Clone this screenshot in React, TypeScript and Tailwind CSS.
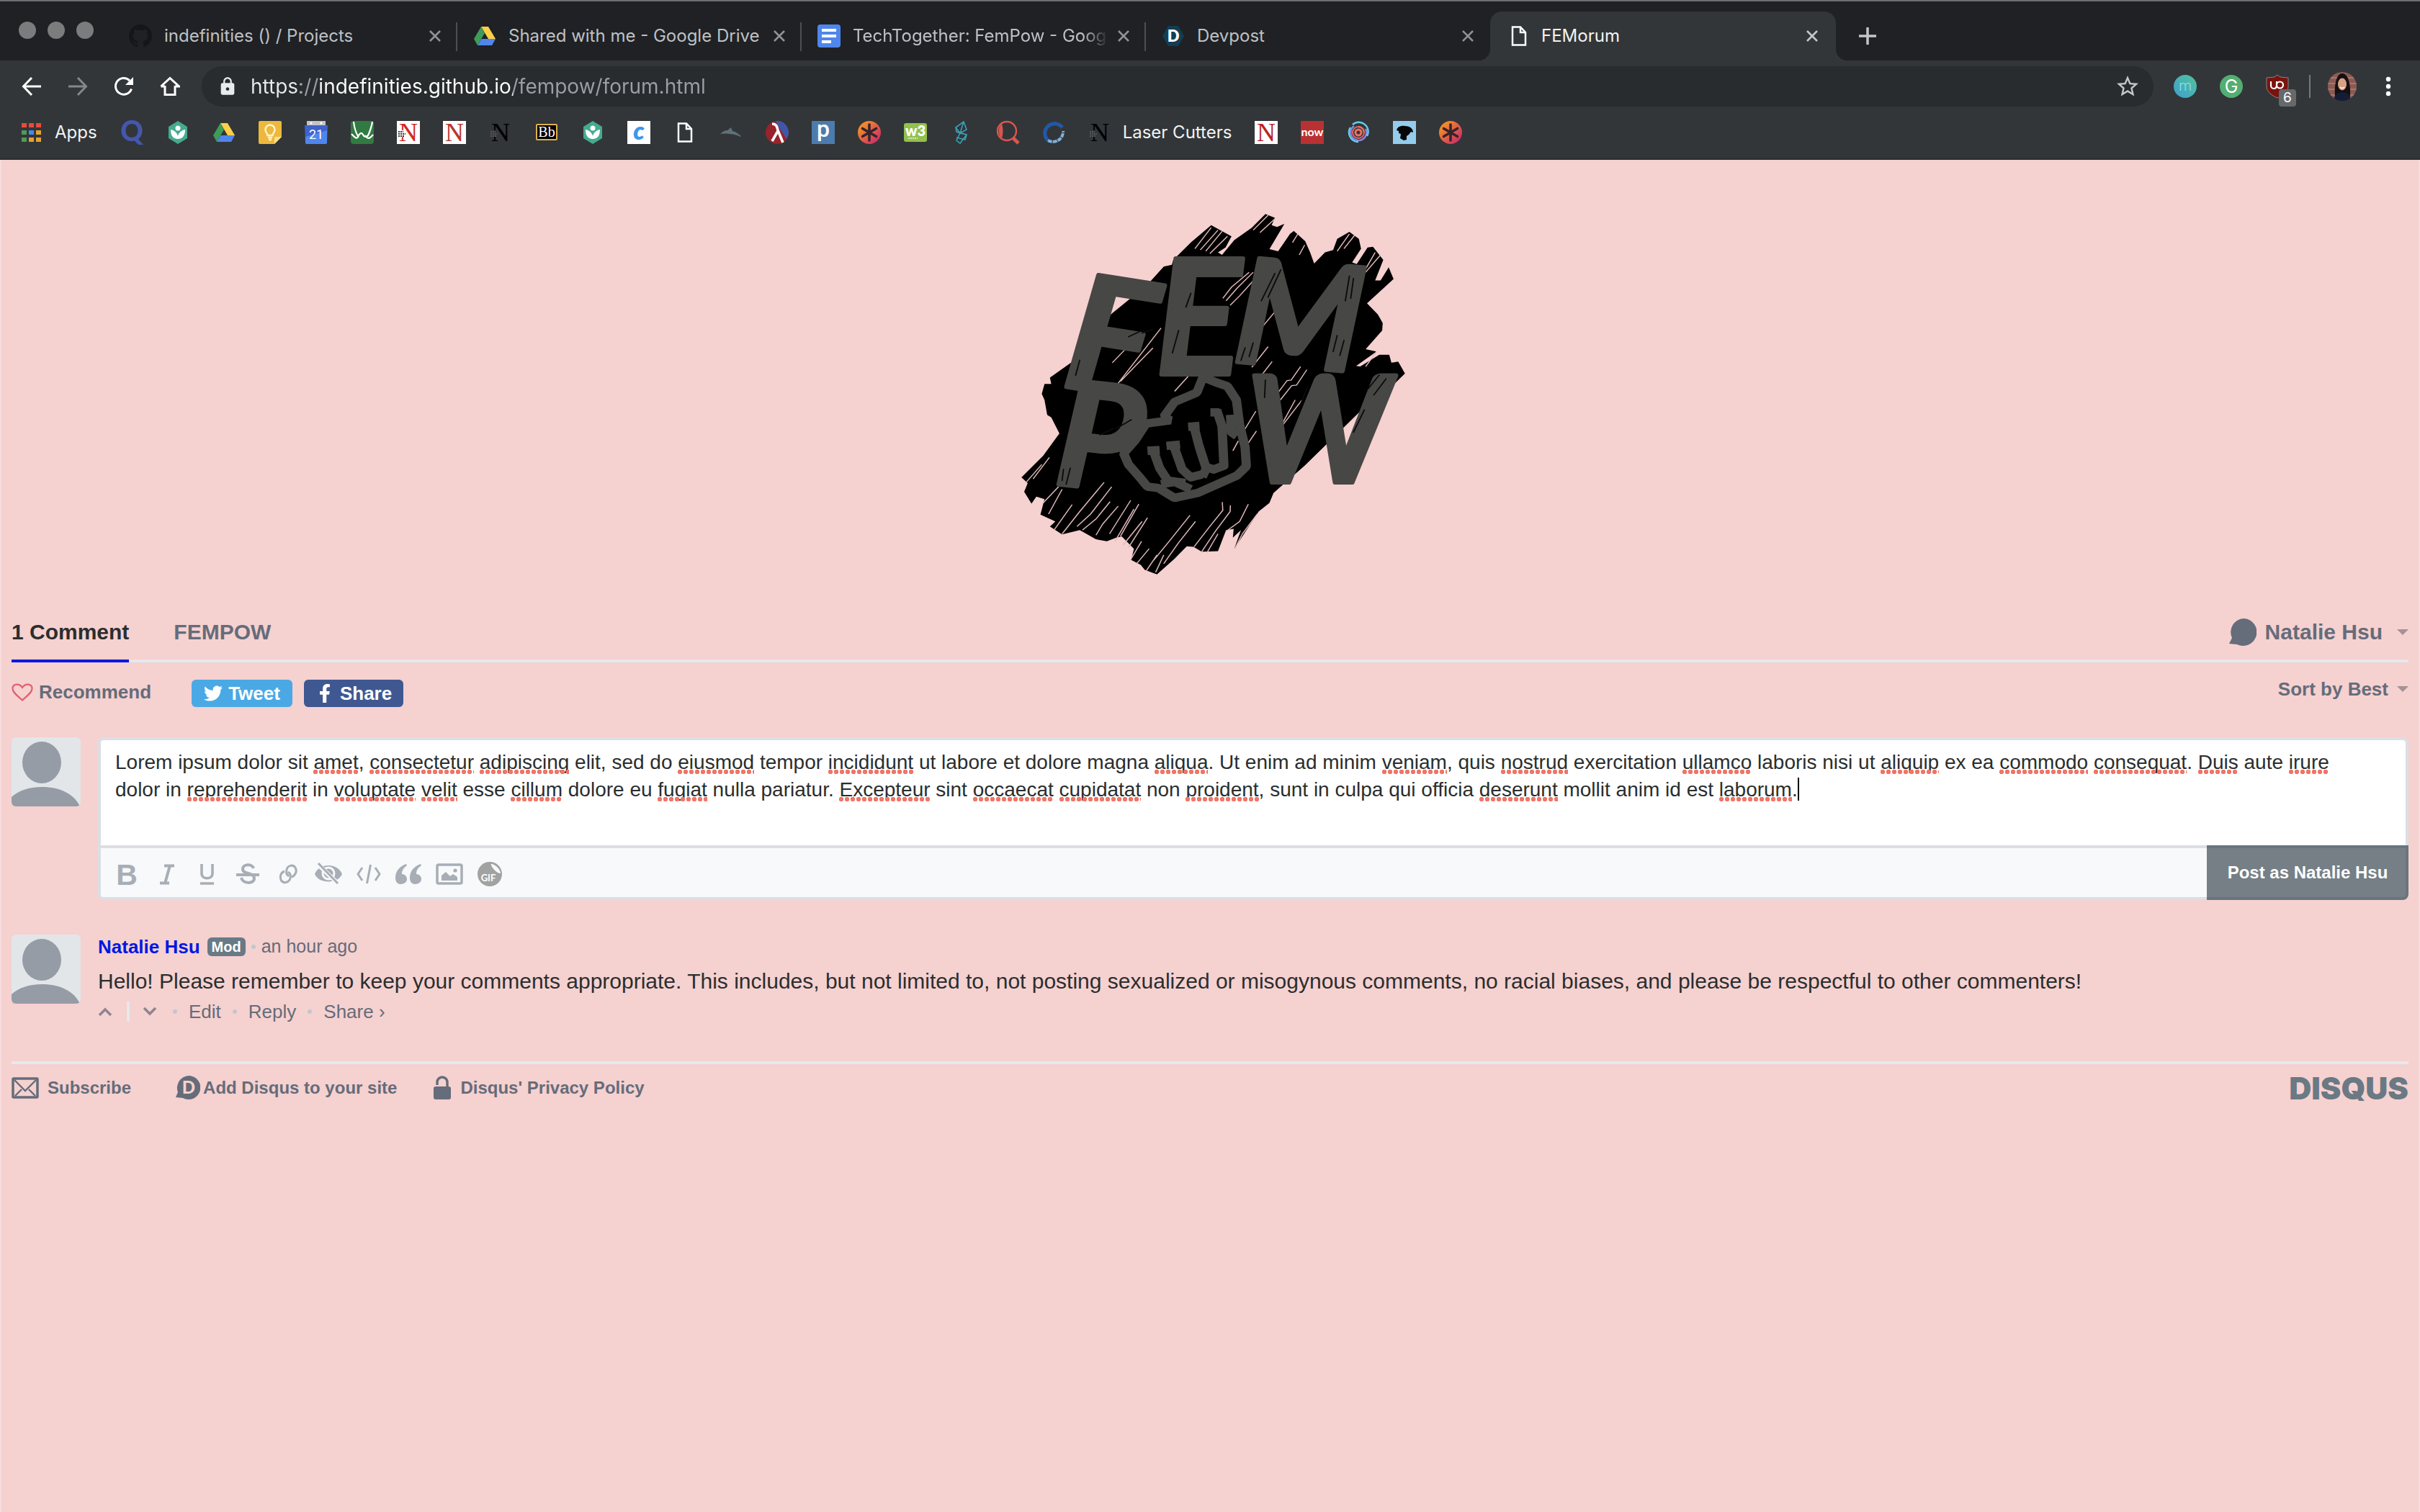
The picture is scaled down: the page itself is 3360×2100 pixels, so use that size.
import React, { useLayoutEffect, useRef, useState } from 'react'
import { FaTwitter, FaFacebookF } from 'react-icons/fa'
import { MdLock, MdStarBorder } from 'react-icons/md'

// words between tildes are the ones the spell checker marks
const LOREM: string[] = [
  'Lorem ipsum dolor sit ~amet~, ~consectetur~ ~adipiscing~ elit, sed do ~eiusmod~ tempor ~incididunt~ ut labore et dolore magna ~aliqua~.',
  'Ut enim ad minim ~veniam~, quis ~nostrud~ exercitation ~ullamco~ laboris nisi ut ~aliquip~ ex ea ~commodo~ ~consequat~.',
  '~Duis~ aute ~irure~ dolor in ~reprehenderit~ in ~voluptate~ ~velit~ esse ~cillum~ dolore eu ~fugiat~ nulla pariatur.',
  '~Excepteur~ sint ~occaecat~ ~cupidatat~ non ~proident~, sunt in culpa qui officia ~deserunt~ mollit anim id est ~laborum~.',
]
const marked = LOREM.join(' ')
const draft = marked.replaceAll('~', '')

/* ---------- small icons ---------- */

type IconProps = { children: React.ReactNode; className?: string; box?: string }

const Icon = ({ children, className = 'size-8 overflow-visible', box = '0 0 32 32' }: IconProps) => (
  <svg viewBox={box} className={`shrink-0 ${className}`} fill="none" aria-hidden="true">
    {children}
  </svg>
)

const DriveIcon = () => (
  <Icon>
    <path d="M11 3h10l10 17H21z" fill="#ffcf48" />
    <path d="M11 3l5 9L6 29 1 20z" fill="#3f9b57" />
    <path d="M11.500 20H31l-5 9H6z" fill="#4f86ec" />
  </Icon>
)

const PageIcon = () => (
  <Icon className="h-8 w-6" box="0 0 24 32">
    <path d="M3 3.500h11l7 7.500v17.500H3zM14 3.500V11h7" stroke="#fff" strokeWidth="2.500" />
  </Icon>
)

const GithubIcon = () => (
  <Icon box="0 0 16 16">
    <path
      fill="#14161a"
      d="M8 0C3.580 0 0 3.580 0 8c0 3.540 2.290 6.530 5.470 7.590.4.070.550-.17.550-.38v-1.490c-2.010.370-2.530-.490-2.690-.940-.090-.230-.480-.940-.820-1.130-.280-.150-.680-.520-.010-.530.630-.010 1.080.580 1.230.820.720 1.210 1.870.870 2.330.660.070-.520.280-.870.510-1.070-1.780-.2-3.640-.890-3.640-3.950 0-.870.310-1.590.820-2.150-.080-.2-.360-1.020.080-2.120 0 0 .670-.210 2.200.820a7.600 7.600 0 014 0c1.530-1.040 2.200-.820 2.200-.820.440 1.100.160 1.920.080 2.120.510.560.820 1.270.820 2.150 0 3.070-1.870 3.750-3.650 3.950.290.250.540.730.540 1.480v2.200c0 .210.150.460.550.380A8 8 0 0016 8c0-4.420-3.580-8-8-8z"
    />
  </Icon>
)

const DocsIcon = () => (
  <Icon>
    <rect width="32" height="32" rx="4" fill="#4f86ec" />
    <path d="M6 8h20M6 16h20M6 24h13" stroke="#fff" strokeWidth="4" />
  </Icon>
)

const DevpostIcon = () => (
  <Icon>
    <path d="M9 2h14l8 14-8 14H9L1 16z" fill="#123d54" />
    <text x="16" y="24" textAnchor="middle" fontSize="22" fontWeight="800" fontFamily="Lato, sans-serif" fill="#fff">D</text>
  </Icon>
)

const LeafIcon = () => (
  <Icon>
    <path d="M16 0l13 8v16l-13 8-13-8V8z" fill="#45ab8e" />
    <circle cx="16" cy="10" r="3.500" fill="#fff" />
    <path d="M6 12c6 1 9 5 10 9 1-4 4-8 10-9 0 8-3 13-10 13S6 20 6 12z" fill="#fff" />
  </Icon>
)

const AsteriskIcon = () => (
  <Icon>
    <defs>
      <linearGradient id="ast" x1="0" y1="0" x2="1" y2="1">
        <stop offset=".2" stopColor="#f18a2c" />
        <stop offset=".9" stopColor="#cc2a68" />
      </linearGradient>
    </defs>
    <circle cx="16" cy="16" r="16" fill="url(#ast)" />
    <path d="M16 5v22M6.500 10.500l19 11M25.500 10.500l-19 11" stroke="#33262c" strokeWidth="3.600" strokeLinecap="round" />
  </Icon>
)

const SerifN = ({ bg, fg, note }: { bg: string; fg: string; note?: string }) => (
  <Icon>
    <rect width="32" height="32" fill={bg} />
    <text x="16" y="28" textAnchor="middle" fontSize="36" fontFamily="Liberation Serif, serif" fill={fg}>N</text>
    {note && (
      <>
        <rect x="1" y="13" width="11" height="9" fill={bg} />
        <path d="M2 15h7M2 18h10M2 21h9" stroke={note} strokeWidth="2" strokeDasharray="2 1" />
      </>
    )}
  </Icon>
)

type Bookmark = { title: string; icon: React.ReactNode; label?: string }

const bookmarks: Bookmark[] = [
  { title: 'Quizlet', icon: (
    <Icon>
      <text x="16" y="28" textAnchor="middle" fontSize="39" fontWeight="900" fontFamily="Lato, sans-serif" fill="#4557ad">Q</text>
    </Icon>
  ) },
  { title: 'Garden', icon: <LeafIcon /> },
  { title: 'Drive', icon: <DriveIcon /> },
  { title: 'Keep', icon: (
    <Icon>
      <path d="M2 0h28a2 2 0 012 2v20L22 32H2a2 2 0 01-2-2V2a2 2 0 012-2z" fill="#edb93c" />
      <path d="M32 22v0L22 32v-8a2 2 0 012-2z" fill="#fbe08a" />
      <path d="M12.500 20c0-3-3-4-3-8a6.500 6.500 0 0113 0c0 4-3 5-3 8zM13 23h6M14 26h4" stroke="#fff3cf" strokeWidth="2.400" />
    </Icon>
  ) },
  { title: 'Calendar', icon: (
    <Icon>
      <path d="M3 0h26v8H3z" fill="#c4c4c4" />
      <path d="M0 6h32l-1 24a2 2 0 01-2 2H3a2 2 0 01-2-2z" fill="#3f62cc" />
      <path d="M1 22l30-9v17a2 2 0 01-2 2H3a2 2 0 01-2-2z" fill="#4f86ec" />
      <circle cx="9" cy="3" r="1.600" fill="#fff" />
      <circle cx="23" cy="3" r="1.600" fill="#fff" />
      <text x="16" y="25" textAnchor="middle" fontSize="18" fontFamily="Roboto, sans-serif" fill="#fff">21</text>
    </Icon>
  ) },
  { title: 'Desmos', icon: (
    <Icon>
      <rect width="32" height="32" rx="4" fill="#317a42" />
      <path d="M4 1c1 9 3 15 6 20 3-4 5-6 7-2s6 4 8-1 4-10 5-17M1 18c5 5 7 8 10 3M20 20c4 7 8 3 11-1" stroke="#fff" strokeWidth="2.200" />
    </Icon>
  ) },
  { title: 'NuVu', icon: <SerifN bg="#fff" fg="#d42a20" note="#333" /> },
  { title: 'News', icon: <SerifN bg="#fff" fg="#b83630" /> },
  { title: 'Nuvu studio', icon: <SerifN bg="#323639" fg="#000" note="#55595c" /> },
  { title: 'Blackboard', icon: (
    <Icon>
      <rect x="2" y="5" width="28" height="21" rx="1" fill="#000" stroke="#e0b04a" strokeWidth="2" />
      <text x="16" y="22" textAnchor="middle" fontSize="20" fontFamily="Liberation Serif, serif" fill="#fff">Bb</text>
    </Icon>
  ) },
  { title: 'Garden two', icon: <LeafIcon /> },
  { title: 'Canvas', icon: (
    <Icon>
      <rect width="32" height="32" fill="#fff" />
      <text x="16" y="26" textAnchor="middle" fontSize="34" fontStyle="italic" fontWeight="800" fontFamily="Lato, sans-serif" fill="#3b97ee">c</text>
    </Icon>
  ) },
  { title: 'Page', icon: <span className="flex w-8 justify-center"><PageIcon /></span> },
  { title: 'Dolphin', icon: (
    <Icon>
      <path d="M1 18c4-4 7-5 10-5l5-4 2 5c5 1 8 4 12 7l-1 1c-6-3-11-4-16-4-5-1-8 0-12 0z" fill="#5f7078" />
    </Icon>
  ) },
  { title: 'Lambda', icon: (
    <Icon>
      <circle cx="16" cy="16" r="16" fill="#98232c" />
      <path d="M14 0a16 16 0 0115 25L17 6z" fill="#3f57a8" />
      <path d="M9 4c6 0 7 4 8 9l7 17M17 14L9 28" stroke="#fff" strokeWidth="3.600" />
    </Icon>
  ) },
  { title: 'Processing', icon: (
    <Icon>
      <rect width="32" height="32" fill="#4c7cae" />
      <text x="16" y="22" textAnchor="middle" fontSize="32" fontFamily="Roboto, sans-serif" fontWeight="500" fill="#fff">p</text>
    </Icon>
  ) },
  { title: 'Asterisk', icon: <AsteriskIcon /> },
  { title: 'W3Schools', icon: (
    <Icon>
      <rect x="0" y="3" width="32" height="26" rx="3" fill="#92c14e" />
      <text x="16" y="21" textAnchor="middle" fontSize="20" fontWeight="800" fontFamily="Lato, sans-serif" fill="#fff">w3</text>
      <path d="M6 24h13" stroke="#d8ebbb" strokeWidth="2" strokeDasharray="2 1" />
    </Icon>
  ) },
  { title: 'Helix', icon: (
    <Icon>
      <path d="M8 9l11-8 4 11-9 5-6-8zM8 9l1 6 14 4-9 12-5-4 5-10M9 15l5 2 9 2-2 7-12-3M19 1l-5 16" stroke="#3ba0b4" strokeWidth="1.600" />
    </Icon>
  ) },
  { title: 'Search', icon: (
    <Icon>
      <circle cx="15" cy="14" r="13" stroke="#d9564f" strokeWidth="2.400" />
      <path d="M8 4a14 14 0 000 20c2-6 2-14 0-20z" fill="#d9564f" />
      <path d="M24 24l7 7" stroke="#d9564f" strokeWidth="5" />
    </Icon>
  ) },
  { title: 'Ring', icon: (
    <Icon>
      <path d="M28 9A13.500 13.500 0 108 27" stroke="#2159a6" strokeWidth="5" />
      <path d="M8 27a14 14 0 0021-13" stroke="#7fb0dc" strokeWidth="4" strokeDasharray="6 1" />
    </Icon>
  ) },
  { title: 'Laser Cutters', icon: <SerifN bg="#323639" fg="#000" note="#55595c" />, label: 'Laser Cutters' },
  { title: 'Newton', icon: <SerifN bg="#fff" fg="#b8261f" /> },
  { title: 'Now', icon: (
    <Icon>
      <rect width="32" height="32" fill="#b93133" />
      <text x="16" y="21" textAnchor="middle" fontSize="16" fontWeight="700" fontFamily="Lato, sans-serif" fill="#fff">now</text>
    </Icon>
  ) },
  { title: 'Spiral', icon: (
    <Icon>
      <circle cx="16" cy="16" r="4" stroke="#ef6f61" strokeWidth="3" />
      <path d="M16 8a8 8 0 018 8" stroke="#ef6f61" strokeWidth="2.400" />
      <path d="M24 16a8 8 0 11-8-8" stroke="#e8616b" strokeWidth="2" />
      <path d="M10 7a11 11 0 1016 4" stroke="#8287e0" strokeWidth="2.400" />
      <path d="M5 9a13 13 0 0011 20M8 5a13 13 0 0120 16" stroke="#62cfe6" strokeWidth="2.400" />
    </Icon>
  ) },
  { title: 'Bird', icon: (
    <Icon>
      <rect width="32" height="32" fill="#94ccec" />
      <path d="M5 13c1-5 6-7 12-6 7 0 11 4 11 9l-3-1-3 4-3 2v5l-4 1-5-3 1-6-3-1v-3z" fill="#050608" />
    </Icon>
  ) },
  { title: 'Asterisk two', icon: <AsteriskIcon /> },
]

/* ---------- browser chrome ---------- */

const CloseX = ({ color }: { color: string }) => (
  <Icon className="size-[18px]" box="0 0 18 18">
    <path d="M2 2l14 14M16 2L2 16" stroke={color} strokeWidth="2.600" />
  </Icon>
)

const tabs = [
  { title: 'indefinities () / Projects', icon: <GithubIcon />, fade: '', last: false },
  { title: 'Shared with me - Google Drive', icon: <DriveIcon />, fade: '', last: false },
  {
    title: 'TechTogether: FemPow - Goog',
    icon: <DocsIcon />,
    fade: '[mask-image:linear-gradient(to_right,#000_calc(100%-36px),transparent)]',
    last: false,
  },
  { title: 'Devpost', icon: <DevpostIcon />, fade: '', last: true },
]

const TabStrip = () => (
  <div className="flex items-end bg-[#202124] pt-3.5">
    <div className="mb-[30px] flex w-[157px] shrink-0 gap-4 pl-[26px]">
      <button aria-label="Close window" className="size-6 rounded-full bg-[#7b7c7e]" />
      <button aria-label="Minimise window" className="size-6 rounded-full bg-[#7b7c7e]" />
      <button aria-label="Zoom window" className="size-6 rounded-full bg-[#7b7c7e]" />
    </div>
    {tabs.map((t) => (
      <div key={t.title} className="relative flex h-[68px] w-[478px] min-w-0 items-center px-[22px]">
        {t.icon}
        <span className={`ml-[17px] min-w-0 flex-1 overflow-hidden text-[24px] whitespace-nowrap text-[#bdc1c6] ${t.fade}`}>
          {t.title}
        </span>
        <button aria-label={`Close ${t.title}`} className="ml-3">
          <CloseX color="#8f9296" />
        </button>
        {!t.last && <span className="absolute top-[15px] right-0 h-10 w-0.5 bg-[#4c4f53]" />}
      </div>
    ))}
    <div className="relative flex h-[68px] w-[480px] min-w-0 items-center rounded-t-2xl bg-[#323639] pr-6 pl-7">
      <span className="absolute bottom-0 -left-4 size-4 bg-[radial-gradient(circle_at_0_0,#202124_16px,#323639_16px)]" />
      <span className="absolute -right-4 bottom-0 size-4 bg-[radial-gradient(circle_at_100%_0,#202124_16px,#323639_16px)]" />
      <PageIcon />
      <span className="ml-[19px] flex-1 text-[24px] text-[#f1f3f4]">FEMorum</span>
      <button aria-label="Close FEMorum">
        <CloseX color="#c4c7ca" />
      </button>
    </div>
    <button aria-label="New tab" className="mb-[22px] ml-8">
      <Icon className="size-6" box="0 0 24 24">
        <path d="M12 0v24M0 12h24" stroke="#c4c7ca" strokeWidth="3.500" />
      </Icon>
    </button>
  </div>
)

const Toolbar = () => (
  <div className="flex items-center bg-[#323639] py-2 pr-10 pl-[30px]">
    <div className="flex w-[250px] shrink-0 gap-9">
      <button aria-label="Back">
        <Icon className="size-7" box="0 0 28 28">
          <path d="M27 14H3M14 2L2.500 14 14 26" stroke="#fff" strokeWidth="3" />
        </Icon>
      </button>
      <button aria-label="Forward">
        <Icon className="size-7" box="0 0 28 28">
          <path d="M1 14h24M14 2l11.500 12L14 26" stroke="#84888b" strokeWidth="3" />
        </Icon>
      </button>
      <button aria-label="Reload">
        <Icon className="size-7" box="0 0 28 28">
          <path d="M24.500 17.500A11.300 11.300 0 1122 6" stroke="#fff" strokeWidth="3" />
          <path d="M27 1v11H16z" fill="#fff" />
        </Icon>
      </button>
      <button aria-label="Home">
        <Icon className="size-7" box="0 0 28 28">
          <path d="M7 13v12.500h14V13M1.500 14L14 2.500 26.500 14H21M7 14H1.500" stroke="#fff" strokeWidth="3" />
        </Icon>
      </button>
    </div>
    <div className="flex h-14 min-w-0 flex-1 items-center rounded-full bg-[#282c2f] pr-[18px] pl-[22px]">
      <MdLock className="size-7 shrink-0 text-[#e8eaed]" />
      <input
        aria-label="Address"
        defaultValue="https://indefinities.github.io/fempow/forum.html"
        className="ml-[18px] min-w-0 flex-1 bg-[linear-gradient(to_right,#e8eaed_69px,#9aa0a6_69px_96px,#ffffff_96px_364px,#9aa0a6_364px)] bg-clip-text text-[28px] text-transparent outline-none"
      />
      <button aria-label="Bookmark this page">
        <MdStarBorder className="size-9 text-[#c4c7ca]" />
      </button>
    </div>
    <div className="ml-7 flex shrink-0 items-center gap-8">
      <button aria-label="Momentum">
        <Icon>
          <defs>
            <linearGradient id="mom" x1="0" y1="1" x2="1" y2="0">
              <stop stopColor="#3f9fcf" />
              <stop offset="1" stopColor="#52c39c" />
            </linearGradient>
          </defs>
          <circle cx="16" cy="16" r="16" fill="url(#mom)" />
          <text x="16" y="22" textAnchor="middle" fontSize="20" fontWeight="300" fontFamily="Roboto, sans-serif" fill="#8fe3e6">m</text>
        </Icon>
      </button>
      <button aria-label="Grammarly">
        <Icon>
          <circle cx="16" cy="16" r="16" fill="#53ae72" />
          <text x="16" y="25" textAnchor="middle" fontSize="25" fontFamily="Inter, sans-serif" fill="#fff">G</text>
        </Icon>
      </button>
      <button aria-label="uBlock Origin, 6 blocked" className="relative">
        <Icon>
          <path d="M16 0l4 3 11 1v12c0 8-8 13-15 16C9 29 1 24 1 16V4l11-1z" fill="#79130f" stroke="#8c8583" />
          <path d="M7 9v6a4 4 0 004 4c3 0 4-2 4-5a4.500 4.500 0 119 0 4.500 4.500 0 01-9 0V9" stroke="#fff" strokeWidth="2.200" />
        </Icon>
        <span className="absolute top-5 left-[18px] flex h-6 w-6 items-center justify-center rounded bg-[#66686a] text-[19px] text-white">6</span>
      </button>
      <span className="-ml-1 h-8 w-0.5 bg-[#76797c]" />
      <button aria-label="Profile" className="-ml-2">
        <Icon className="size-10" box="0 0 40 40">
          <defs>
            <clipPath id="me"><circle cx="20" cy="20" r="20" /></clipPath>
          </defs>
          <g clipPath="url(#me)">
            <rect width="40" height="40" fill="#8d5a52" />
            <path d="M0 8h40M0 16h40M0 24h40M0 32h40" stroke="#a9827c" strokeWidth="1.500" />
            <path d="M11 40C8 26 10 2 20 2s13 22 10 38z" fill="#150f12" />
            <ellipse cx="20" cy="17" rx="6" ry="8.500" fill="#d9a184" />
            <path d="M17 21q3 3 6 0" stroke="#fff" strokeWidth="1.500" />
            <path d="M8 40c1-9 6-12 12-12s11 3 12 12z" fill="#141d38" />
          </g>
        </Icon>
      </button>
      <button aria-label="Menu" className="ml-2">
        <Icon className="h-8 w-2" box="0 0 8 32">
          <circle cx="4" cy="6" r="3.200" fill="#fff" />
          <circle cx="4" cy="16" r="3.200" fill="#fff" />
          <circle cx="4" cy="26" r="3.200" fill="#fff" />
        </Icon>
      </button>
    </div>
  </div>
)

const gridColors = ['#e84b3c', '#e84b3c', '#e84b3c', '#4f9b57', '#4688f1', '#e5a22f', '#4f9b57', '#e5a22f', '#e5a22f']

const BookmarksBar = () => (
  <nav className="flex items-center gap-8 border-b-2 border-[#2a2d2f] bg-[#323639] pb-2 pl-[30px] text-[24px] text-[#f1f3f4]">
    <a href="#apps" className="flex h-14 items-center gap-[18px]">
      <Icon className="size-7" box="0 0 28 28">
        {gridColors.map((c, i) => (
          <rect key={i} x={(i % 3) * 10} y={1 + Math.floor(i / 3) * 10} width="7" height="6" fill={c} />
        ))}
      </Icon>
      Apps
    </a>
    {bookmarks.map((b) => (
      <a key={b.title} href="#bookmark" aria-label={b.title} className="flex h-14 items-center gap-4">
        {b.icon}
        {b.label}
      </a>
    ))}
  </nav>
)

/* ---------- page ---------- */

const BLOB =
  'M775 95L850 140L828 185L800 205L815 215L860 155L925 105L975 50L1010 65L998 95L1018 102L1045 90L990 192L1022 200L1066 130L1080 118L1122 160L1140 205L1155 250L1195 205L1225 195L1240 150L1285 122L1320 150L1328 190L1295 245L1312 252L1352 185L1372 182L1410 235L1380 318L1400 318L1430 265L1448 312L1350 410L1390 455L1408 490L1406 520L1345 595L1385 605L1310 663L1325 665L1395 618L1432 618L1440 650L1465 645L1490 693L1395 795L1340 830L1120 1065L1005 1175L990 1215L950 1250L860 1400L885 1325L855 1355L858 1320L830 1325L800 1410L740 1412L710 1392L685 1390L640 1440L575 1503L530 1485L515 1465L480 1445L490 1400L445 1350L425 1355L390 1370L350 1362L290 1325L225 1342L180 1310L200 1290L145 1262L160 1200L130 1190L112 1218L85 1170L98 1135L75 1112L155 1025L215 935L185 870L170 860L160 800L150 775L160 735L185 735L180 710L270 640L300 560L410 450L540 335L600 262L630 255L635 235L700 165Z'

const STREAKS =
  'M178 1032L118 1118M150 1060L90 1135M212 1150L155 1215M225 1160L175 1260M262 1222L195 1325M290 1085L265 1125M380 1132L290 1250L225 1340M408 1150L330 1260L280 1310M402 1210L350 1280L300 1325M432 1228L375 1300L350 1345M478 1205L400 1340M508 1220L440 1350M490 1240L420 1370M540 1275L470 1395M520 1290L450 1385M518 1370L480 1440M546 1400L500 1460M575 1425L535 1490M600 1425L570 1495M697 1265L620 1370L560 1450M717 1290L655 1375L600 1460M816 1212L818 1245L770 1310L712 1392M846 1225L845 1250L790 1330L740 1412M912 1220L880 1290L830 1330M945 1260L890 1340L862 1400M800 1340L760 1415M590 510L430 735M560 590L440 725M485 565L410 650M690 705L640 765M940 845L890 935M942 925L905 985M875 965L855 1005M1128 678L1090 740L1072 742L1030 800M1105 665L1070 720L1055 722L1015 780M1085 800L1025 920M1110 800L1040 900M1000 645L948 718M985 585L925 668M1015 438L960 510M915 285L850 345L818 390M942 305L880 380L845 418M930 285L870 350L830 400M775 105L715 190M800 115L735 195M815 120L755 200M835 140L770 210M985 55L930 115M1010 70L955 125M1285 130L1240 200M1305 135L1265 190M1380 205L1330 300M1400 215L1345 285M1385 605L1345 665M1095 130L1075 165M1120 175L1100 215'

// dry bristle marks over the lettering
const BRISTLES =
  'M1032 275L985 385M1010 290L960 400M1285 300L1270 400M1300 310L1290 390M1240 540L1225 605M1265 560L1250 620M900 590L885 640M930 570L915 625M255 1075L240 1140M230 1080L225 1125M290 640L275 700M560 515L520 530M510 525L470 545M700 370L682 425M655 520L632 610M480 880L425 915M415 915L365 940M975 720L972 790M1130 750L1100 830M1395 700L1350 760M1420 715L1375 780M1340 840L1300 930'

const FIST =
  'M745 708L722 770L640 808L600 868L625 882L535 895L495 962L452 1015L470 1060L510 1110L540 1150L580 1155L640 1195L725 1175L870 1105L905 1068L900 990L880 900L868 800L835 745L790 728Z'

const FINGERS =
  'M540 1005L585 1002M562 1005L585 1075L615 1125L680 1135M610 985L660 980M637 985L668 1080L700 1112L742 1100M690 908L732 905M712 908L730 985L755 1070L790 1082M772 850L805 850M795 840L815 905L822 1065L780 1082M846 860L850 930L870 945M760 1070L742 1110M590 1140L640 1130L700 1160'

const Logo = () => (
  <svg viewBox="-10 0 600 540" className="mx-auto mt-[58px] h-[540px] w-[600px]" role="img" aria-label="FEM POW">
    <g transform="scale(.3763 .3444)">
      <path d={BLOB} fill="#000" />
      <path d={STREAKS} fill="none" stroke="#e0b9b9" strokeWidth="4" />
      <path d={FIST} fill="none" stroke="#474745" strokeWidth="34" strokeLinejoin="bevel" />
      <path d={FINGERS} fill="none" stroke="#474745" strokeWidth="34" strokeLinejoin="round" />
    </g>
    <g
      fill="#474745"
      stroke="#474745"
      strokeWidth="6"
      strokeLinejoin="round"
      fontWeight="700"
      fontStyle="italic"
      fontFamily="Lato, sans-serif"
    >
      <text x="82" y="256" fontSize="222" transform="rotate(9 82 256)">F</text>
      <text x="214" y="240" fontSize="222">E</text>
      <text x="320" y="222" fontSize="202" transform="rotate(5 320 222)">M</text>
      <text x="72" y="392" fontSize="202" transform="rotate(6 72 392)">P</text>
      <text x="340" y="390" fontSize="206">W</text>
    </g>
    <g transform="scale(.3763 .3444)">
      <path d={BRISTLES} fill="none" stroke="#0c0c0c" strokeWidth="5" strokeLinecap="round" />
    </g>
  </svg>
)

const Avatar = () => (
  <Icon className="size-24 rounded-md" box="0 0 96 96">
    <rect width="96" height="96" fill="#e2e6e9" />
    <ellipse cx="42" cy="35" rx="27" ry="29" fill="#959ca6" />
    <path d="M0 83C10 74 24 69 42 69c26 0 45 10 53 27H0z" fill="#959ca6" />
  </Icon>
)

const Caret = () => (
  <Icon className="h-2 w-4" box="0 0 16 8">
    <path d="M0 0h16L8 8z" fill="#a79193" />
  </Icon>
)

const DiscussHeader = () => (
  <div>
    <div className="flex items-end border-b-4 border-[#e7e8ec] pt-10 text-[30px] leading-9 font-bold text-[#656c7a]">
      <button className="-mb-1 border-b-4 border-[#0017e4] pb-5 text-[#2a2e2e]">1 Comment</button>
      <a href="#fempow" className="ml-[62px] pb-5">FEMPOW</a>
      <button className="ml-auto flex h-14 items-center gap-3 pb-5">
        <Icon className="size-[38px]" box="0 0 38 38">
          <path d="M20 0a19 19 0 11-9 36L0 35l4-8A19 19 0 0120 0z" fill="#656c7a" />
        </Icon>
        Natalie Hsu
        <span className="ml-2"><Caret /></span>
      </button>
    </div>
    <div className="flex h-[104px] items-start pt-6 text-[26px] font-bold text-[#656c7a]">
      <button className="flex h-[34px] items-center gap-2">
        <Icon className="h-[26px] w-[30px]" box="0 0 30 26">
          <path d="M15 24.500C8 18 1.500 13.500 1.500 8.500 1.500 1.500 11 .5 15 7c4-6.500 13.500-5.500 13.500 1.500 0 5-6.500 9.500-13.500 16z" stroke="#e3606f" strokeWidth="2.200" />
        </Icon>
        Recommend
      </button>
      <button className="ml-14 flex h-[38px] w-[140px] items-center justify-center gap-2 rounded-md bg-[#4aa9e5] text-white">
        <FaTwitter className="size-[26px]" />
        Tweet
      </button>
      <button className="ml-4 flex h-[38px] w-[138px] items-center justify-center gap-2 rounded-md bg-[#3f5892] text-white">
        <FaFacebookF className="size-[26px]" />
        Share
      </button>
      <button className="ml-auto flex h-[26px] items-center gap-3">
        Sort by Best
        <Caret />
      </button>
    </div>
  </div>
)

const tools: { name: string; icon: React.ReactNode }[] = [
  { name: 'Bold', icon: <text x="16" y="31" textAnchor="middle" fontSize="41" fontWeight="700" fill="currentColor">B</text> },
  { name: 'Italic', icon: <path d="M12 4.500h14M6 28.500h13M20 4l-7 25" stroke="currentColor" strokeWidth="4" /> },
  { name: 'Underline', icon: <path d="M8 2v13c0 9 15 9 15 0V2M6 29h19" stroke="currentColor" strokeWidth="3.600" /> },
  { name: 'Strikethrough', icon: <path d="M24 8c-2-7-15-6-15 1 0 8 16 4 16 13 0 8-16 8-18-1M0 17h32" stroke="currentColor" strokeWidth="4" /> },
  { name: 'Link', icon: <path d="M11 12c-5 2-7 7-5 12 3 6 11 4 13-2 1-4 0-7-3-9M21 20c5-2 8-8 5-13C23 2 15 4 14 10c-1 4 0 7 3 9" stroke="currentColor" strokeWidth="3" /> },
  { name: 'Spoiler', icon: (
    <>
      <path d="M-3 16C3 0 29 0 35 16 29 30 3 30-3 16z" fill="currentColor" />
      <circle cx="16" cy="15" r="8" stroke="#f7f9fa" strokeWidth="3" />
      <path d="M0 1l30 29" stroke="#f7f9fa" strokeWidth="6" />
      <path d="M2 1l27 28" stroke="currentColor" strokeWidth="3" />
    </>
  ) },
  { name: 'Code', icon: <path d="M7 7L1 16l6 9M25 7l6 9-6 9M18.500 3l-5 26" stroke="currentColor" strokeWidth="3" /> },
  { name: 'Quote', icon: (
    <path
      d="M12 2C3 5-3 12-3 21c0 6 3 9 7.500 9S13 27 13 23s-3-7-7-7c0-6 3-9 7-12zM32 2c-9 3-15 10-15 19 0 6 3 9 7.500 9s8.500-3 8.500-7-3-7-7-7c0-6 3-9 7-12z"
      fill="currentColor"
    />
  ) },
  { name: 'Image', icon: (
    <>
      <rect x="-1" y="3" width="34" height="26" rx="2" stroke="currentColor" strokeWidth="3.500" />
      <path d="M5 25v-7l6-5 6 6 4-3 6 4v5z" fill="currentColor" />
      <circle cx="24" cy="11" r="2.600" fill="currentColor" />
    </>
  ) },
  { name: 'GIF', icon: (
    <>
      <circle cx="16" cy="16" r="17" fill="#a1a3a2" />
      <path d="M16 1c8 0 15 7 16 15-6 0-13-6-16-15z" fill="#f7f9fa" stroke="#a1a3a2" strokeWidth="1.500" />
      <text x="14" y="26" textAnchor="middle" fontSize="13" fontWeight="700" fontFamily="Lato, sans-serif" fill="#fff">GIF</text>
    </>
  ) },
]

type Mark = { left: number; top: number; width: number }

// wraps the draft the way the text box does and returns where each marked word lies
const findMarks = (box: HTMLTextAreaElement) => {
  const style = getComputedStyle(box)
  const ctx = document.createElement('canvas').getContext('2d')!
  ctx.font = `${style.fontSize} ${style.fontFamily}`
  const width = (s: string) => ctx.measureText(s).width
  const padLeft = parseFloat(style.paddingLeft)
  const padTop = parseFloat(style.paddingTop)
  const lineHeight = parseFloat(style.lineHeight)
  const room = box.clientWidth - padLeft - parseFloat(style.paddingRight)

  const marks: Mark[] = []
  let line = ''
  let row = 0
  for (const raw of marked.split(' ')) {
    const word = raw.replaceAll('~', '')
    if (width(line + word) > room) {
      line = ''
      row++
    }
    if (raw.startsWith('~')) {
      marks.push({
        left: padLeft + width(line),
        top: padTop + row * lineHeight,
        width: width(raw.split('~')[1]),
      })
    }
    line += word + ' '
  }
  return { marks, end: { left: padLeft + width(line.trimEnd()), top: padTop + row * lineHeight } }
}

const DraftBox = () => {
  const ref = useRef<HTMLTextAreaElement>(null)
  const [marks, setMarks] = useState<Mark[]>([])
  const [end, setEnd] = useState({ left: 0, top: 0 })

  useLayoutEffect(() => {
    const update = () => {
      if (!ref.current) return
      const found = findMarks(ref.current)
      setMarks(found.marks)
      setEnd(found.end)
    }
    update()
    window.addEventListener('resize', update)
    return () => window.removeEventListener('resize', update)
  }, [])

  return (
    <div className="relative">
      <label htmlFor="draft" className="sr-only">Comment</label>
      <textarea
        id="draft"
        ref={ref}
        defaultValue={draft}
        spellCheck={false}
        className="block h-[146px] w-full resize-none overflow-hidden pt-3 pr-12 pl-5 text-[28px] leading-[38px] text-[#2a2e2e] outline-none"
      />
      {marks.map((m, i) => (
        <span
          key={i}
          className="pointer-events-none absolute mt-[29px] h-1.5 bg-[radial-gradient(circle_at_3px_3px,#ef7668_3px,transparent_3px)] bg-[length:8px_6px]"
          style={m}
        />
      ))}
      <span className="pointer-events-none absolute mt-0.5 h-8 w-0.5 bg-black" style={end} />
    </div>
  )
}

const Composer = () => (
  <form className="flex gap-6" onSubmit={(e) => e.preventDefault()}>
    <Avatar />
    <div className="min-w-0 flex-1 rounded-lg border-4 border-[#dbdfe4] bg-white">
      <DraftBox />
      <div className="flex h-[72px] items-center rounded-b border-t-4 border-[#dbdfe4] bg-[#f7f9fa]">
        <div className="flex items-center gap-6 pt-1 pl-5 text-[#a8aeb6]">
          {tools.map((t) => (
            <button key={t.name} type="button" aria-label={t.name}>
              <Icon>{t.icon}</Icon>
            </button>
          ))}
        </div>
        <button className="-mt-1 -mr-1 -mb-1 ml-auto h-[76px] w-[280px] self-start rounded-br-lg border-y-4 border-r-4 border-[#69757e] bg-[#757f85] pl-1 text-[24px] font-bold text-white">
          Post as Natalie Hsu
        </button>
      </div>
    </div>
  </form>
)

const Dot = () => <span className="block size-1.5 rounded-full bg-[#c2c6cd]" />

const Comment = () => (
  <article className="mt-12 flex gap-6">
    <Avatar />
    <div className="min-w-0 pt-1">
      <header className="flex h-[26px] items-center text-[26px]">
        <a href="#natalie" className="font-bold text-[#0017e4]">Natalie Hsu</a>
        <span className="ml-2.5 flex h-[26px] items-center rounded-md bg-[#687a86] px-1.5 text-[20px] font-bold text-white">Mod</span>
        <span className="mx-2"><Dot /></span>
        <a href="#time" className="text-[25px] text-[#656c7a]">an hour ago</a>
      </header>
      <p className="mt-4 text-[30px] leading-[38px] text-[#2a2e2e]">
        Hello! Please remember to keep your comments appropriate. This includes, but not limited to, not posting sexualized or misogynous comments, no racial biases, and please be respectful to other commenters!
      </p>
      <footer className="mt-2 flex h-[30px] items-center text-[26px] text-[#656c7a]">
        <button aria-label="Vote up">
          <Icon className="h-3 w-5" box="0 0 20 12">
            <path d="M2 11l8-8 8 8" stroke="#8f858f" strokeWidth="3.500" />
          </Icon>
        </button>
        <span className="mr-[18px] ml-5 h-7 w-1 bg-[#e7e8ec]" />
        <button aria-label="Vote down">
          <Icon className="h-3 w-5" box="0 0 20 12">
            <path d="M2 1l8 8 8-8" stroke="#8f858f" strokeWidth="3.500" />
          </Icon>
        </button>
        <span className="mr-4 ml-[22px]"><Dot /></span>
        <button>Edit</button>
        <span className="mx-4"><Dot /></span>
        <button>Reply</button>
        <span className="mx-4"><Dot /></span>
        <button>Share ›</button>
      </footer>
    </div>
  </article>
)

const Footer = () => (
  <footer className="mt-[54px] flex h-[70px] items-center border-t-4 border-[#e7e8ec] text-[24px] font-bold text-[#656c7a]">
    <a href="#subscribe" className="flex items-center gap-3">
      <Icon className="h-[30px] w-[38px]" box="0 0 38 30">
        <rect x="2" y="2" width="34" height="26" rx="1" stroke="#656c7a" strokeWidth="3.500" />
        <path d="M4 4l15 15L34 4M5 26l9-9M33 26l-9-9" stroke="#656c7a" strokeWidth="2.400" />
      </Icon>
      Subscribe
    </a>
    <a href="#add" className="ml-[62px] flex items-center gap-1">
      <Icon className="size-[34px]" box="0 0 34 34">
        <path d="M18 0a16.500 16.500 0 11-8 31l-10-1 3-7A17 17 0 0118 0z" fill="#656c7a" />
        <text x="18" y="25" textAnchor="middle" fontSize="24" fontWeight="900" fontFamily="Lato, sans-serif" fill="#f5d1cf">D</text>
      </Icon>
      Add Disqus to your site
    </a>
    <a href="#privacy" className="ml-[50px] flex items-center gap-3">
      <Icon className="h-[34px] w-[26px]" box="0 0 26 34">
        <rect x="1" y="15" width="24" height="18" rx="3" fill="#656c7a" />
        <path d="M6 13V9a7 7 0 0114 0v6" stroke="#656c7a" strokeWidth="3.400" />
      </Icon>
      Disqus' Privacy Policy
    </a>
    <a href="#disqus" className="ml-auto font-[Inter,sans-serif] text-[43px] leading-none font-black text-[#6a7983]">DISQUS</a>
  </footer>
)

const App = () => {
  return (
    <div className="flex min-h-screen flex-col bg-[#f5d1d0] font-['Liberation_Sans',Arial,sans-serif]">
      <header className="border-t-2 border-[#6c6e70] font-[Inter,sans-serif]">
        <TabStrip />
        <Toolbar />
        <BookmarksBar />
      </header>
      <main className="flex-1 border-x-2 border-[#f7dcdc] px-3.5">
        <Logo />
        <DiscussHeader />
        <Composer />
        <Comment />
        <Footer />
      </main>
    </div>
  )
}

export default App
